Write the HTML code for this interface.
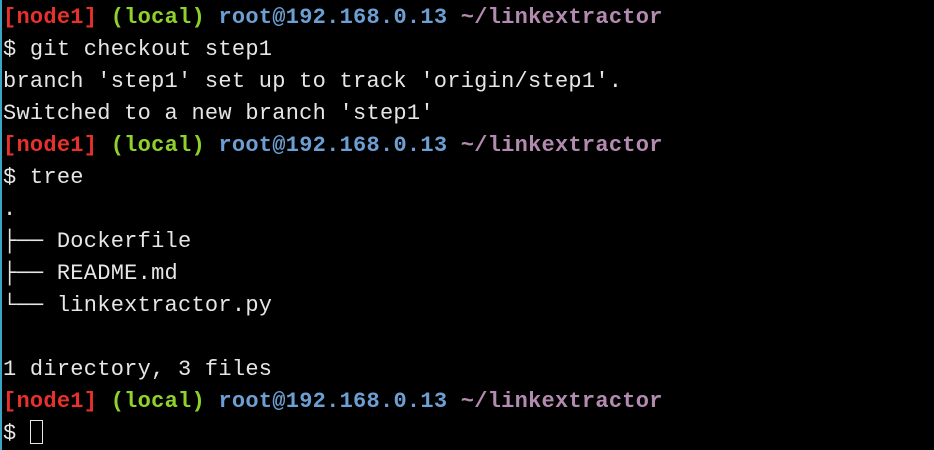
<!DOCTYPE html>
<html><head><meta charset="utf-8"><style>
html,body{margin:0;padding:0;background:#000;width:934px;height:450px;overflow:hidden}
body{border-left:2px solid #3aa6c4;box-sizing:border-box}
pre{margin:0;padding:2px 0 0 1px;font-family:"Liberation Mono","DejaVu Sans Mono",monospace;font-size:22px;line-height:32px;color:#e6e6e6;letter-spacing:0.26px}
.r{color:#e8302c;font-weight:bold}.g{color:#8fd22e;font-weight:bold}.b{color:#6c9fd3;font-weight:bold}.p{color:#b48bb0;font-weight:bold}
.cur{display:inline-block;width:11px;height:22px;border:1.5px solid #e6e6e6;vertical-align:-5px}
</style></head><body><pre><span class="r">[node1]</span> <span class="g">(local)</span> <span class="b">root@192.168.0.13</span> <span class="p">~/linkextractor</span>
$ git checkout step1
branch 'step1' set up to track 'origin/step1'.
Switched to a new branch 'step1'
<span class="r">[node1]</span> <span class="g">(local)</span> <span class="b">root@192.168.0.13</span> <span class="p">~/linkextractor</span>
$ tree
.
├── Dockerfile
├── README.md
└── linkextractor.py

1 directory, 3 files
<span class="r">[node1]</span> <span class="g">(local)</span> <span class="b">root@192.168.0.13</span> <span class="p">~/linkextractor</span>
$ <span class="cur"></span></pre></body></html>
